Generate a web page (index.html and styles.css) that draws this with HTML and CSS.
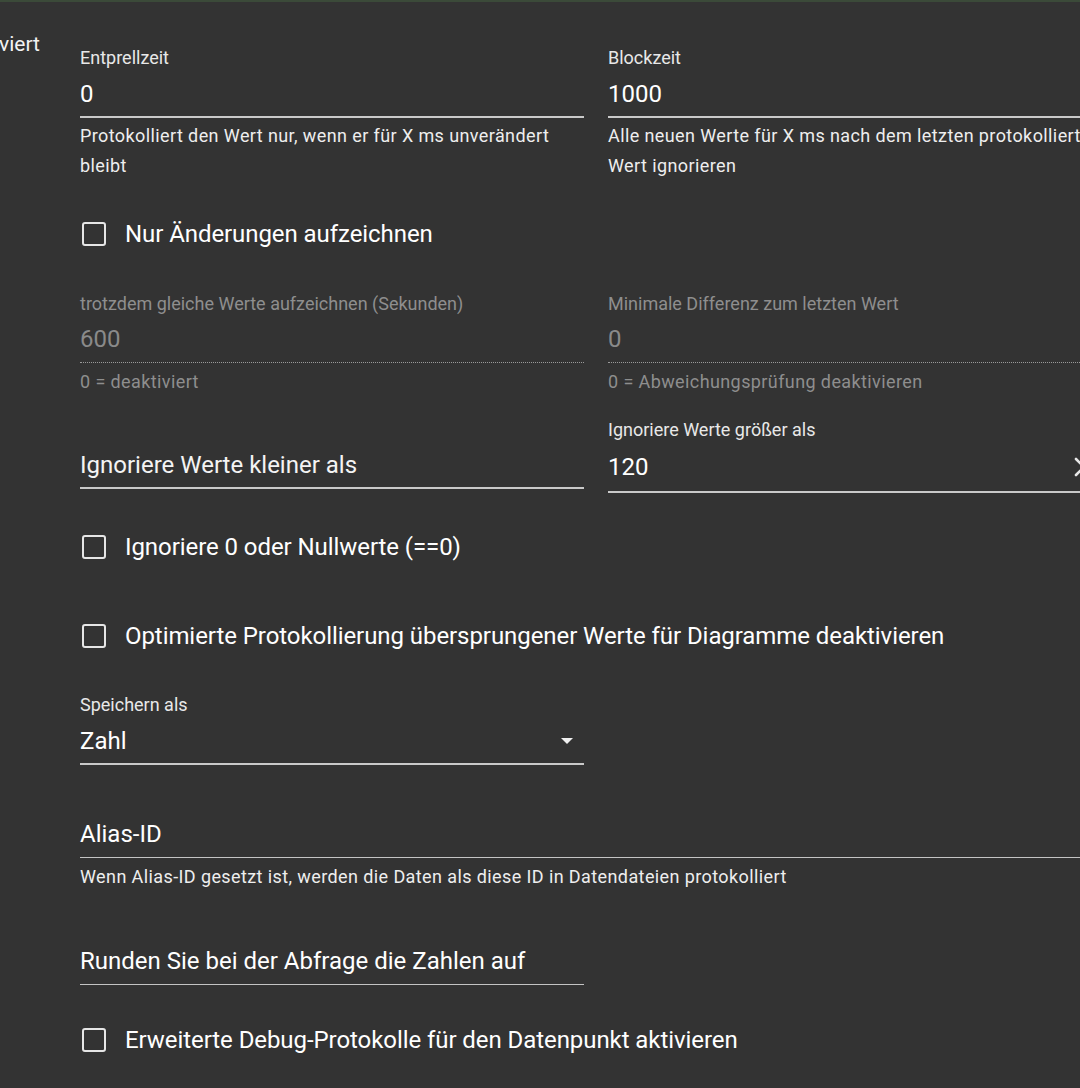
FILE: index.html
```html
<!DOCTYPE html>
<html lang="de">
<head>
<meta charset="utf-8">
<title>Einstellungen</title>
<link rel="stylesheet" href="styles.css">
</head>
<body>
<div class="page">
  <div class="side"><span class="side-text">aktiviert</span></div>
  <div class="form">
    <div class="grid row1">
      <div class="field">
        <div class="label">Entprellzeit</div>
        <div class="value">0</div>
        <div class="helper">Protokolliert den Wert nur, wenn er für X ms unverändert bleibt</div>
      </div>
      <div class="field">
        <div class="label">Blockzeit</div>
        <div class="value">1000</div>
        <div class="helper">Alle neuen Werte für X ms nach dem letzten protokollierten Wert ignorieren</div>
      </div>
    </div>

    <div class="cb-row cb1"><span class="box"></span><span class="cb-text">Nur Änderungen aufzeichnen</span></div>

    <div class="grid row3">
      <div class="field disabled">
        <div class="label">trotzdem gleiche Werte aufzeichnen (Sekunden)</div>
        <div class="value">600</div>
        <div class="helper">0 = deaktiviert</div>
      </div>
      <div class="field disabled">
        <div class="label">Minimale Differenz zum letzten Wert</div>
        <div class="value">0</div>
        <div class="helper">0 = Abweichungsprüfung deaktivieren</div>
      </div>
    </div>

    <div class="grid row4">
      <div class="field">
        <div class="label"></div>
        <div class="value placeholder">Ignoriere Werte kleiner als</div>
      </div>
      <div class="field">
        <div class="label">Ignoriere Werte größer als</div>
        <div class="value number">120<svg class="clear" width="22" height="22" viewBox="0 0 22 22"><path d="M3 3 L19 19 M19 3 L3 19" stroke="#e8e8e8" stroke-width="2.6" stroke-linecap="round" fill="none"/></svg></div>
      </div>
    </div>

    <div class="cb-row cb2"><span class="box"></span><span class="cb-text">Ignoriere 0 oder Nullwerte (==0)</span></div>
    <div class="cb-row cb3"><span class="box"></span><span class="cb-text">Optimierte Protokollierung übersprungener Werte für Diagramme deaktivieren</span></div>

    <div class="grid row5">
      <div class="field">
        <div class="label">Speichern als</div>
        <div class="value select">Zahl<span class="arrow"></span></div>
      </div>
    </div>

    <div class="field wide alias">
      <div class="value thin placeholder">Alias-ID</div>
      <div class="helper small">Wenn Alias-ID gesetzt ist, werden die Daten als diese ID in Datendateien protokolliert</div>
    </div>

    <div class="grid row6">
      <div class="field">
        <div class="value thin placeholder">Runden Sie bei der Abfrage die Zahlen auf</div>
      </div>
    </div>

    <div class="cb-row cb4"><span class="box"></span><span class="cb-text">Erweiterte Debug-Protokolle für den Datenpunkt aktivieren</span></div>
  </div>
</div>
</body>
</html>
```

FILE: styles.css
```css
html, body {
  margin: 0;
  padding: 0;
  background: #333333;
  overflow: hidden;
}
body {
  border-top: 2px solid #3b4a39;
  font-family: Roboto, "Liberation Sans", sans-serif;
  color: #ffffff;
  height: 1086px;
}
.page {
  display: flex;
  align-items: flex-start;
}
.side {
  width: 40px;
  flex: none;
  overflow: hidden;
  display: flex;
  justify-content: flex-end;
  white-space: nowrap;
  padding-top: 28px;
  font-size: 21px;
  line-height: 28px;
  color: #f2f2f2;
}
.side-text { flex: none; }
.form {
  margin-left: 40px;
  width: 1048px;
  flex: none;
  padding-top: 44px;
  display: flex;
  flex-direction: column;
}
.grid {
  display: grid;
  grid-template-columns: 504px 520px;
  column-gap: 24px;
  align-items: start;
}
.field {
  display: flex;
  flex-direction: column;
}
.label {
  font-size: 18px;
  line-height: 24px;
  height: 24px;
  margin-bottom: 10px;
  color: #e8e8e8;
  white-space: nowrap;
}
.value {
  position: relative;
  font-size: 24px;
  line-height: 28px;
  padding-bottom: 8px;
  border-bottom: 2px solid #c9c9c9;
  color: #ffffff;
}
.helper {
  margin-top: 3px;
  font-size: 18px;
  line-height: 30px;
  letter-spacing: 0.4px;
  color: #eeeeee;
}
.disabled .label { color: #8e8e8e; }
.disabled .value {
  color: #8a8a8a;
  border-bottom: 1px dotted #9a9a9a;
  padding-bottom: 9px;
  margin-top: -1px;
}
.disabled .helper {
  margin-top: 4px;
  color: #8e8e8e;
}
.cb-row {
  display: flex;
  align-items: center;
  height: 50px;
}
.box {
  width: 20px;
  height: 20px;
  border: 2.5px solid #e6e6e6;
  border-radius: 3px;
  margin-left: 2px;
  flex: none;
}
.cb-text {
  margin-left: 19px;
  font-size: 24px;
  line-height: 28px;
  letter-spacing: -0.07px;
  color: #ffffff;
  white-space: nowrap;
}
.cb1 { margin-top: 28px; }
.row3 { margin-top: 33px; }
.row4 { margin-top: 21px; }
.row4 .placeholder { margin-top: -1px; color: #f4f4f4; }
.number {
  padding-bottom: 10px;
  margin-top: 1px;
}
.clear {
  position: absolute;
  left: 465px;
  top: 3px;
}
.cb2 { margin-top: 29px; }
.cb3 { margin-top: 39px; }
.row5 { margin-top: 32px; }
.select {
  display: flex;
  align-items: center;
  justify-content: space-between;
}
.arrow {
  width: 0;
  height: 0;
  border-left: 6px solid transparent;
  border-right: 6px solid transparent;
  border-top: 6px solid #f0f0f0;
  margin-right: 11px;
}
.thin {
  border-bottom: 1px solid #c4c4c4;
  padding-bottom: 9px;
}
.alias { margin-top: 55px; }
.helper.small {
  margin-top: 4px;
  font-size: 18px;
  letter-spacing: 0.4px;
}
.row6 { margin-top: 55px; }
.cb4 { margin-top: 30px; }
```
